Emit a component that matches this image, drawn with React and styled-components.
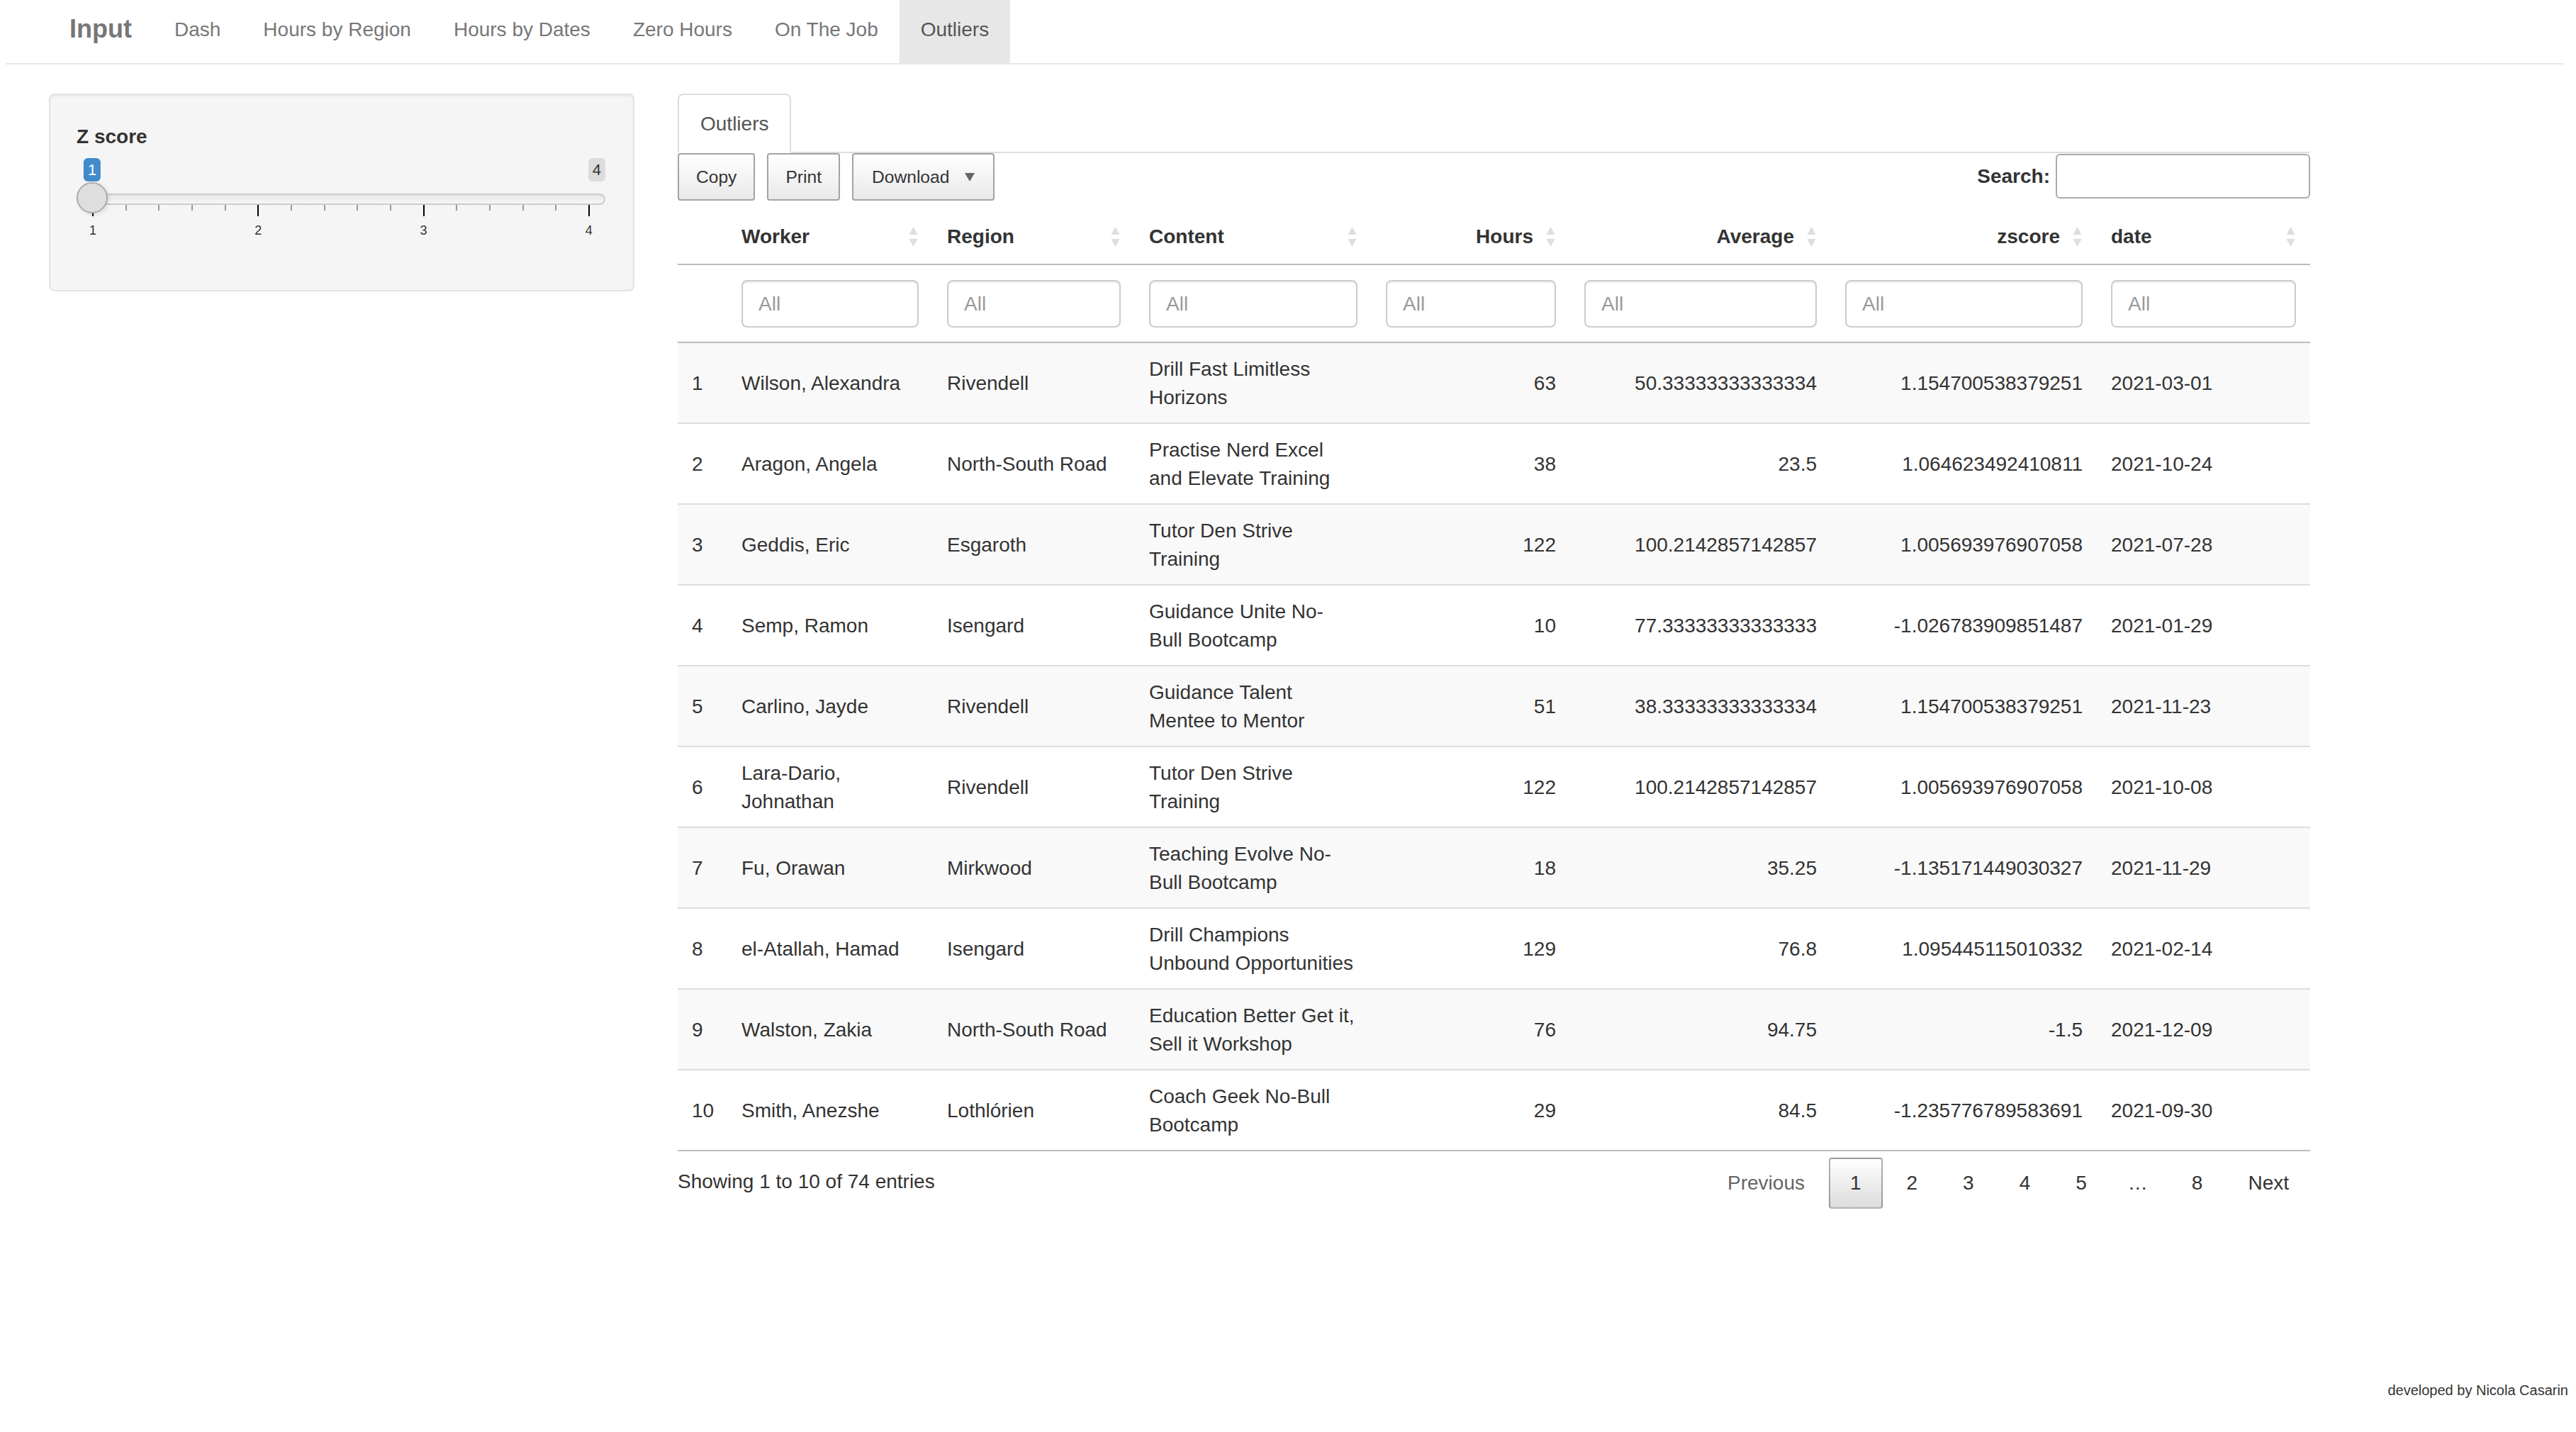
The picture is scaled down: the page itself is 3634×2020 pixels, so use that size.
import React from "react";
import styled, { createGlobalStyle } from "styled-components";

const GlobalStyle = createGlobalStyle`
  * {
    box-sizing: border-box;
  }

  html,
  body {
    margin: 0;
    padding: 0;
    background: #fff;
  }

  body {
    font-family: "Liberation Sans", Arial, Helvetica, sans-serif;
    font-size: 28px;
    line-height: 40px;
    color: #333;
  }
`;

const Page = styled.div`
  min-height: 100vh;
  display: flex;
  flex-direction: column;
`;

// top navigation
const NavBar = styled.nav`
  display: flex;
  height: 91px;
  margin: 0 18px 0 8px;
  padding-left: 60px;
  background: #fff;
  border-bottom: 2px solid #e7e7e7;
`;

const Brand = styled.a`
  padding: 21px 30px 0;
  font-size: 36px;
  font-weight: bold;
  line-height: 40px;
  color: #777;
`;

const NavLink = styled.a`
  padding: 22px 30px 0;
  line-height: 40px;
  color: ${(p) => (p.$active ? "#555" : "#777")};
  background: ${(p) => (p.$active ? "#e7e7e7" : "transparent")};
`;

const Content = styled.div`
  display: flex;
  align-items: flex-start;
  gap: 61px;
  padding: 41px 0 0 69px;
`;

// sidebar
const Well = styled.div`
  width: 826px;
  padding: 38px 39px 38px 37px;
  background: #f5f5f5;
  border: 2px solid #e3e3e3;
  border-radius: 8px;
  box-shadow: inset 0 2px 2px rgba(0, 0, 0, 0.05);
`;

const FieldLabel = styled.label`
  display: block;
  margin-bottom: 10px;
  padding-top: 1px;
  font-weight: bold;
  line-height: 40px;
`;

const Slider = styled.div`
  position: relative;
  height: 119px;
  margin-bottom: 29px;
`;

const Track = styled.div`
  position: absolute;
  top: 50px;
  left: 0;
  right: 0;
  height: 16px;
  border: 2px solid #cccccc;
  border-radius: 16px;
  background: linear-gradient(to bottom, #dedede -50%, #ffffff 150%);
`;

const Handle = styled.div`
  position: absolute;
  top: 34px;
  left: 0;
  width: 44px;
  height: 44px;
  border-radius: 50%;
  background: #dedede;
  border: 2px solid #ababab;
  box-shadow: 2px 2px 6px rgba(0, 0, 0, 0.1);
  z-index: 2;
`;

const ValueTag = styled.span`
  position: absolute;
  top: 0;
  padding: 2px 6px;
  font-size: 22px;
  line-height: 29px;
  border-radius: 6px;
  color: ${(p) => (p.$selected ? "#fff" : "#333")};
  background: ${(p) => (p.$selected ? "#428bca" : "rgba(0, 0, 0, 0.1)")};
  ${(p) =>
    p.$selected
      ? "left: 22px; transform: translateX(-50%); z-index: 3;"
      : "right: 0;"}
`;

const Grid = styled.div`
  position: absolute;
  top: 66px;
  left: 22px;
  right: 22px;
  display: flex;
  justify-content: space-between;
`;

const Tick = styled.div`
  position: relative;
  width: 2px;
  height: ${(p) => (p.$major ? 16 : 8)}px;
  background: ${(p) => (p.$major ? "#000" : "#999")};
`;

const TickLabel = styled.span`
  position: absolute;
  top: 27px;
  left: 50%;
  transform: translateX(-50%);
  font-size: 18px;
  line-height: 18px;
  color: #333;
`;

// main panel
const Main = styled.div`
  width: 2303px;
`;

const TabBar = styled.div`
  display: flex;
  border-bottom: 2px solid #ddd;
`;

const Tab = styled.a`
  margin-bottom: -2px;
  padding: 21px 30px 19px;
  line-height: 40px;
  color: #555;
  background: #fff;
  border: 2px solid #ddd;
  border-bottom-color: transparent;
  border-radius: 8px 8px 0 0;
`;

const Toolbar = styled.div`
  display: flex;
  justify-content: space-between;
  align-items: flex-start;
  height: 67px;
`;

const ButtonGroup = styled.div`
  display: flex;
  gap: 17px;
`;

const ToolButton = styled.button`
  display: flex;
  align-items: center;
  height: 67px;
  padding: 0 ${(p) => (p.$menu ? 26 : 24)}px;
  font-family: inherit;
  font-size: 24.6px;
  color: #333;
  background: linear-gradient(to bottom, #ffffff 0%, #e9e9e9 100%);
  border: 2px solid #a3a3a3;
  border-radius: 4px;
`;

const Caret = styled.span`
  margin-left: 22px;
  width: 0;
  height: 0;
  border-left: 7px solid transparent;
  border-right: 7px solid transparent;
  border-top: 12px solid #666;
`;

const SearchLabel = styled.label`
  display: flex;
  align-items: center;
  margin-top: 1px;
  font-weight: bold;
`;

const SearchInput = styled.input`
  width: 359px;
  height: 63px;
  margin-left: 8px;
  padding: 0 10px;
  font-size: 28px;
  border: 2px solid #aaa;
  border-radius: 6px;
`;

const Table = styled.table`
  width: 100%;
  margin-top: 8px;
  table-layout: fixed;
  border-collapse: separate;
  border-spacing: 0;
`;

const Col = styled.col`
  width: ${(p) => p.$w}px;
`;

const Th = styled.th`
  padding: 23px 21px 18px 20px;
  font-weight: bold;
  line-height: 40px;
  text-align: ${(p) => p.$align || "left"};
  border-bottom: 2px solid #bbb;
`;

const HeadInner = styled.div`
  display: flex;
  align-items: center;
  justify-content: ${(p) => (p.$align === "right" ? "flex-end" : "space-between")};
  gap: 18px;
`;

const FilterCell = styled.td`
  padding: 21px 20px 20px;
  border-bottom: 2px solid #bbb;
`;

const FilterInput = styled.input`
  display: block;
  width: 100%;
  height: 67px;
  padding: 0 22px;
  font-family: inherit;
  font-size: 28px;
  color: #555;
  background: #fff;
  border: 2px solid #ccc;
  border-radius: 8px;
  box-shadow: inset 0 2px 2px rgba(0, 0, 0, 0.075);

  &::placeholder {
    color: #999;
  }
`;

const Row = styled.tr`
  background: ${(p) => (p.$odd ? "#f9f9f9" : "#fff")};
`;

const Td = styled.td`
  padding: 17px 20px 15px;
  line-height: 40px;
  vertical-align: middle;
  white-space: pre-line;
  text-align: ${(p) => p.$align || "left"};
  border-bottom: 2px solid ${(p) => (p.$last ? "#bbb" : "#ddd")};
`;

const TableFooter = styled.div`
  display: flex;
  justify-content: space-between;
  align-items: flex-start;
`;

const Info = styled.div`
  padding-top: 23px;
`;

const Pagination = styled.div`
  display: flex;
  align-items: center;
  padding-top: 9px;
`;

const PageButton = styled.a`
  margin-left: 4px;
  padding: 14px 28px;
  min-width: 42px;
  line-height: 40px;
  text-align: center;
  color: ${(p) => (p.$disabled ? "#666" : "#333")};
  border: 2px solid ${(p) => (p.$current ? "rgba(0, 0, 0, 0.3)" : "transparent")};
  border-radius: 4px;
  background: ${(p) =>
    p.$current ? "linear-gradient(to bottom, #ffffff 0%, #dcdcdc 100%)" : "transparent"};
`;

const Ellipsis = styled.span`
  padding: 0 28px;
  line-height: 40px;
`;

const Credit = styled.div`
  margin-top: auto;
  padding: 0 11px 45px 0;
  text-align: right;
  font-size: 20px;
  line-height: 28px;
  color: #333;
`;

const SortIcon = () => (
  <svg width="13" height="30" viewBox="0 0 13 30">
    <path d="M0.5 12 L6.5 1 L12.5 12 Z" fill="#dedede" />
    <path d="M0.5 18 L12.5 18 L6.5 29 Z" fill="#dedede" />
  </svg>
);

const navItems = [
  "Dash",
  "Hours by Region",
  "Hours by Dates",
  "Zero Hours",
  "On The Job",
  "Outliers",
];

const columns = [
  { key: "n", label: "", w: 70 },
  { key: "worker", label: "Worker", w: 290 },
  { key: "region", label: "Region", w: 285 },
  { key: "content", label: "Content", w: 334 },
  { key: "hours", label: "Hours", w: 280, align: "right" },
  { key: "average", label: "Average", w: 368, align: "right" },
  { key: "zscore", label: "zscore", w: 375, align: "right" },
  { key: "date", label: "date", w: 301 },
];

const rows = [
  ["1", "Wilson, Alexandra", "Rivendell", "Drill Fast Limitless\nHorizons", "63", "50.33333333333334", "1.154700538379251", "2021-03-01"],
  ["2", "Aragon, Angela", "North-South Road", "Practise Nerd Excel\nand Elevate Training", "38", "23.5", "1.064623492410811", "2021-10-24"],
  ["3", "Geddis, Eric", "Esgaroth", "Tutor Den Strive\nTraining", "122", "100.2142857142857", "1.005693976907058", "2021-07-28"],
  ["4", "Semp, Ramon", "Isengard", "Guidance Unite No-\nBull Bootcamp", "10", "77.33333333333333", "-1.026783909851487", "2021-01-29"],
  ["5", "Carlino, Jayde", "Rivendell", "Guidance Talent\nMentee to Mentor", "51", "38.33333333333334", "1.154700538379251", "2021-11-23"],
  ["6", "Lara-Dario, Johnathan", "Rivendell", "Tutor Den Strive\nTraining", "122", "100.2142857142857", "1.005693976907058", "2021-10-08"],
  ["7", "Fu, Orawan", "Mirkwood", "Teaching Evolve No-\nBull Bootcamp", "18", "35.25", "-1.135171449030327", "2021-11-29"],
  ["8", "el-Atallah, Hamad", "Isengard", "Drill Champions\nUnbound Opportunities", "129", "76.8", "1.095445115010332", "2021-02-14"],
  ["9", "Walston, Zakia", "North-South Road", "Education Better Get it,\nSell it Workshop", "76", "94.75", "-1.5", "2021-12-09"],
  ["10", "Smith, Anezshe", "Lothlórien", "Coach Geek No-Bull\nBootcamp", "29", "84.5", "-1.235776789583691", "2021-09-30"],
];

// 1..4 with 5 subdivisions per step
const ticks = Array.from({ length: 16 }, (_, i) => ({
  major: i % 5 === 0,
  label: i % 5 === 0 ? String(i / 5 + 1) : null,
}));

function ZSlider() {
  return (
    <Slider>
      <Track />
      <Grid>
        {ticks.map((t, i) => (
          <Tick key={i} $major={t.major}>
            {t.label && <TickLabel>{t.label}</TickLabel>}
          </Tick>
        ))}
      </Grid>
      <Handle />
      <ValueTag $selected>1</ValueTag>
      <ValueTag>4</ValueTag>
    </Slider>
  );
}

export default function App() {
  return (
    <Page>
      <GlobalStyle />
      <NavBar>
        <Brand>Input</Brand>
        {navItems.map((item) => (
          <NavLink key={item} $active={item === "Outliers"}>
            {item}
          </NavLink>
        ))}
      </NavBar>

      <Content>
        <Well>
          <FieldLabel>Z score</FieldLabel>
          <ZSlider />
        </Well>

        <Main>
          <TabBar>
            <Tab>Outliers</Tab>
          </TabBar>

          <Toolbar>
            <ButtonGroup>
              <ToolButton>Copy</ToolButton>
              <ToolButton>Print</ToolButton>
              <ToolButton $menu>
                Download
                <Caret />
              </ToolButton>
            </ButtonGroup>
            <SearchLabel>
              Search:
              <SearchInput type="search" />
            </SearchLabel>
          </Toolbar>

          <Table>
            <colgroup>
              {columns.map((c) => (
                <Col key={c.key} $w={c.w} />
              ))}
            </colgroup>
            <thead>
              <tr>
                {columns.map((c) => (
                  <Th key={c.key} $align={c.align}>
                    {c.label && (
                      <HeadInner $align={c.align}>
                        <span>{c.label}</span>
                        <SortIcon />
                      </HeadInner>
                    )}
                  </Th>
                ))}
              </tr>
              <tr>
                {columns.map((c) => (
                  <FilterCell key={c.key}>
                    {c.label && <FilterInput placeholder="All" readOnly />}
                  </FilterCell>
                ))}
              </tr>
            </thead>
            <tbody>
              {rows.map((r, ri) => (
                <Row key={r[0]} $odd={ri % 2 === 0}>
                  {r.map((cell, ci) => (
                    <Td
                      key={ci}
                      $align={columns[ci].align}
                      $last={ri === rows.length - 1}
                    >
                      {cell}
                    </Td>
                  ))}
                </Row>
              ))}
            </tbody>
          </Table>

          <TableFooter>
            <Info>Showing 1 to 10 of 74 entries</Info>
            <Pagination>
              <PageButton $disabled>Previous</PageButton>
              <PageButton $current>1</PageButton>
              <PageButton>2</PageButton>
              <PageButton>3</PageButton>
              <PageButton>4</PageButton>
              <PageButton>5</PageButton>
              <Ellipsis>…</Ellipsis>
              <PageButton>8</PageButton>
              <PageButton>Next</PageButton>
            </Pagination>
          </TableFooter>
        </Main>
      </Content>

      <Credit>developed by Nicola Casarin</Credit>
    </Page>
  );
}
